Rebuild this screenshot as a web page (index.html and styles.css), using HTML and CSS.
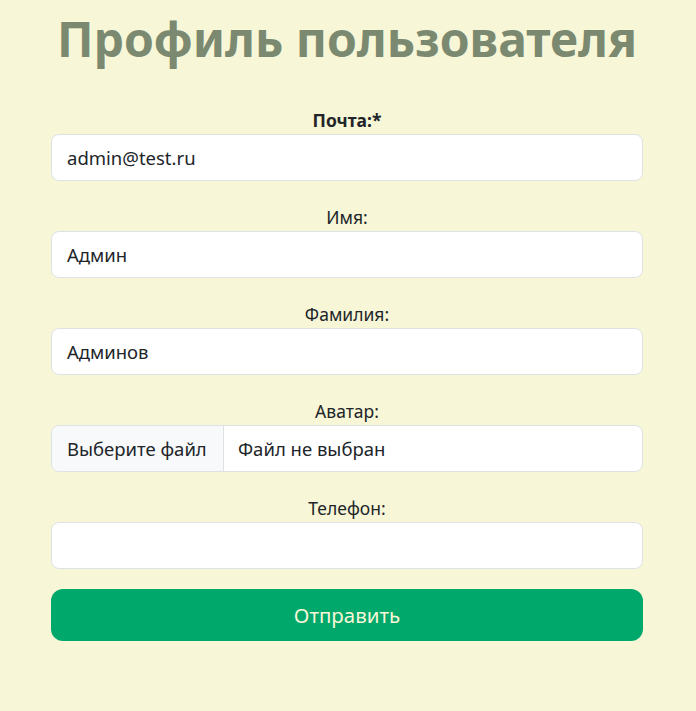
FILE: index.html
```html
<!DOCTYPE html>
<html lang="ru">
<head>
<meta charset="utf-8">
<title>Профиль пользователя</title>
<link rel="stylesheet" href="styles.css">
</head>
<body>
<main class="page">
  <h1 class="title">Профиль пользователя</h1>
  <form class="form">
    <div class="group">
      <label class="label label-bold">Почта:*</label>
      <div class="input">admin@test.ru</div>
    </div>
    <div class="group">
      <label class="label">Имя:</label>
      <div class="input">Админ</div>
    </div>
    <div class="group">
      <label class="label">Фамилия:</label>
      <div class="input">Админов</div>
    </div>
    <div class="group">
      <label class="label">Аватар:</label>
      <div class="input file">
        <span class="file-btn">Выберите файл</span>
        <span class="file-name">Файл не выбран</span>
      </div>
    </div>
    <div class="group group-last">
      <label class="label">Телефон:</label>
      <div class="input"></div>
    </div>
    <button type="button" class="submit">Отправить</button>
  </form>
</main>
</body>
</html>
```
FILE: styles.css
```css
* { box-sizing: border-box; }
html, body { margin: 0; padding: 0; }
body {
  background: #f7f6d7;
  font-family: "Noto Sans", "Open Sans", sans-serif;
  color: #212529;
  width: 696px;
  height: 711px;
  overflow: hidden;
}
.page {
  padding: 0 53px 0 51px;
}
.title {
  margin: 0;
  padding-top: 6px;
  height: 108px;
  text-align: center;
  font-size: 48px;
  line-height: 66px;
  font-weight: 700;
  color: #7a8970;
}
.form { display: flex; flex-direction: column; }
.group { display: flex; flex-direction: column; margin-bottom: 24px; }
.group-last { margin-bottom: 20px; }
.label {
  display: block;
  text-align: center;
  font-size: 17.5px;
  line-height: 25px;
  height: 26px;
}
.label-bold { font-weight: 700; }
.input {
  height: 47px;
  background: #fff;
  border: 1px solid #dee2e6;
  border-radius: 8px;
  padding: 0 15px;
  font-size: 18.5px;
  line-height: 45px;
  color: #212529;
}
.file { display: flex; padding: 0; overflow: hidden; }
.file-btn {
  background: #f8f9fa;
  border-right: 1px solid #dee2e6;
  padding: 0 15px;
  width: 172px;
  white-space: nowrap;
}
.file-name { padding-left: 14px; }
.submit {
  height: 52px;
  border: none;
  border-radius: 12px;
  background: #00a86b;
  color: #f7f6d7;
  font-family: inherit;
  font-size: 20.5px;
  padding: 0;
}
```
